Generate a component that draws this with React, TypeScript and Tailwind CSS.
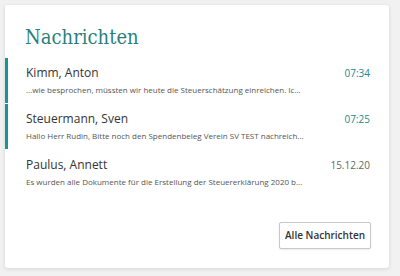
import React from 'react';

interface Message {
  name: string;
  preview: string;
  time: string;
  unread: boolean;
}

const MESSAGES: Message[] = [
  {
    name: 'Kimm, Anton',
    preview: '...wie besprochen, müssten wir heute die Steuerschätzung einreichen. Ic...',
    time: '07:34',
    unread: true,
  },
  {
    name: 'Steuermann, Sven',
    preview: 'Hallo Herr Rudin, Bitte noch den Spendenbeleg Verein SV TEST nachreich...',
    time: '07:25',
    unread: true,
  },
  {
    name: 'Paulus, Annett',
    preview: 'Es wurden alle Dokumente für die Erstellung der Steuererklärung 2020 b...',
    time: '15.12.20',
    unread: false,
  },
];

const App: React.FC = () => {
  return (
    <div className="w-[400px] h-[276px] bg-[#f1f1f1] p-[5px] font-['Open_Sans',sans-serif]">
      <div className="w-[384px] h-[263px] bg-white rounded-[3px] shadow-[0_1px_4px_rgba(0,0,0,0.12)] flex flex-col">
        {/* Header */}
        <h1 className="pl-[20px] pt-[17px] h-[53px] text-[20px] leading-[30px] text-[#2b7f7c] font-['DejaVu_Serif_Condensed','DejaVu_Serif',serif] [font-stretch:condensed] font-light">
          Nachrichten
        </h1>

        {/* Message list */}
        <div className="flex flex-col">
          {MESSAGES.map((m) => (
            <div
              key={m.name}
              className={`h-[45px] mb-px pl-[18px] pr-[19px] pt-[7px] border-l-[3px] ${m.unread ? 'border-[#1a9490]' : 'border-transparent'}`}
            >
              <div className="flex items-center justify-between h-[16px]">
                <span className="text-[12px] text-[#333]">{m.name}</span>
                <span className={`text-[10px] ${m.unread ? 'text-[#1a8a8c]' : 'text-[#666]'}`}>{m.time}</span>
              </div>
              <div className="mt-[2px] text-[8px] leading-[14px] text-[#555] whitespace-nowrap">{m.preview}</div>
            </div>
          ))}
        </div>

        {/* Footer */}
        <div className="mt-auto flex justify-end pr-[18px] pb-[19px]">
          <button className="h-[27px] px-[5px] border border-[#c8c8c8] rounded-[2px] bg-white text-[10px] font-semibold text-[#333] shadow-[0_1px_2px_rgba(0,0,0,0.08)]">
            Alle Nachrichten
          </button>
        </div>
      </div>
    </div>
  );
};

export default App;
